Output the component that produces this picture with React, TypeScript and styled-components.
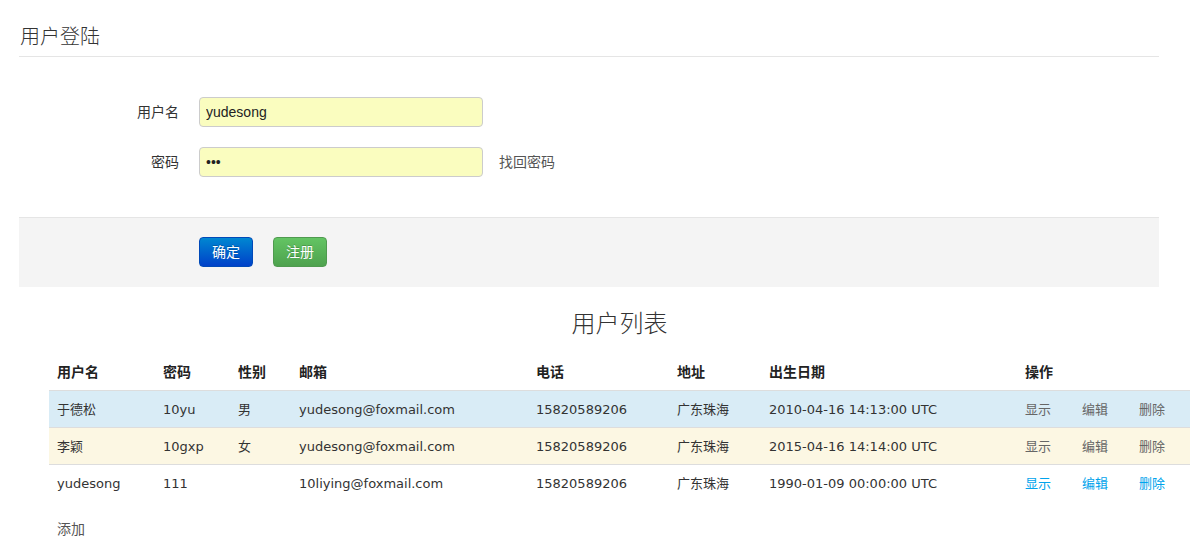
import React from "react";
import styled, { createGlobalStyle } from "styled-components";

const Global = createGlobalStyle`
  html, body { margin: 0; padding: 0; background: #fff; overflow: hidden; }
  body {
    font-family: "Liberation Sans", "Noto Sans CJK SC", sans-serif;
    font-size: 14px;
    color: #333;
  }
`;

const Page = styled.div`
  width: 1190px;
`;

const LoginSection = styled.section`
  width: 1140px;
  margin-left: 19px;
  padding-top: 16px;
`;

const Legend = styled.h2`
  margin: 0;
  padding-left: 1px;
  font-size: 20px;
  font-weight: 300;
  line-height: 40px;
  color: #333;
  border-bottom: 1px solid #e5e5e5;
  font-family: "Noto Sans CJK SC", sans-serif;
`;

const Fields = styled.div`
  display: flex;
  flex-direction: column;
  gap: 20px;
  padding: 40px 0 40px;
`;

const FieldRow = styled.div`
  display: flex;
  align-items: center;
  height: 30px;
`;

const Label = styled.label`
  width: 160px;
  margin-right: 20px;
  padding-bottom: 3px;
  text-align: right;
  font-size: 14px;
  color: #333;
  font-family: "Noto Sans CJK SC", sans-serif;
`;

const Input = styled.input`
  box-sizing: border-box;
  width: 284px;
  height: 30px;
  padding: 4px 6px;
  border: 1px solid #ccc;
  border-radius: 4px;
  background: #fafdbf;
  font-family: "Liberation Sans", sans-serif;
  font-size: 14px;
  color: #222;
  outline: none;
`;

const HelpLink = styled.a`
  margin-left: 16px;
  padding-bottom: 3px;
  font-size: 14px;
  color: #555;
  text-decoration: none;
  font-family: "Noto Sans CJK SC", sans-serif;
`;

const Actions = styled.div`
  display: flex;
  gap: 20px;
  padding: 19px 0 20px 180px;
  background: #f4f4f4;
  border-top: 1px solid #e5e5e5;
`;

const Button = styled.button<{ $tone: "primary" | "success" }>`
  box-sizing: border-box;
  width: 54px;
  height: 30px;
  border-radius: 4px;
  font-size: 14px;
  color: #fff;
  font-family: "Noto Sans CJK SC", sans-serif;
  cursor: pointer;
  padding: 0 0 2px;
  border: 1px solid
    ${(p) => (p.$tone === "primary" ? "#0049b8" : "#4f9a4f")};
  background: ${(p) =>
    p.$tone === "primary"
      ? "linear-gradient(to bottom, #0087d1, #0041c9)"
      : "linear-gradient(to bottom, #63c463, #4ea24e)"};
  text-shadow: 0 -1px 0 rgba(0, 0, 0, 0.2);
`;

const ListSection = styled.section`
  margin-left: 49px;
  width: 1141px;
`;

const ListTitle = styled.h1`
  margin: 0;
  padding: 17px 0 13px;
  text-align: center;
  font-size: 24px;
  font-weight: 300;
  line-height: 36px;
  color: #333;
  font-family: "Noto Sans CJK SC", sans-serif;
`;

const Table = styled.table`
  width: 1141px;
  table-layout: fixed;
  border-collapse: collapse;
  font-family: "DejaVu Sans", "Noto Sans CJK SC", sans-serif;
`;

const HeadRow = styled.tr`
  height: 37px;
`;

const Th = styled.th`
  padding: 0 8px 1px;
  text-align: left;
  font-size: 14px;
  font-weight: 700;
  line-height: 20px;
  color: #222;
  font-family: "Noto Sans CJK SC", sans-serif;
  border-bottom: 1px solid #ddd;
`;

const Tr = styled.tr<{ $bg?: string }>`
  height: 37px;
  background: ${(p) => p.$bg || "transparent"};
  border-top: 1px solid #ddd;
`;

const Td = styled.td`
  padding: 2px 8px 0;
  font-size: 13px;
  line-height: 20px;
  color: #333;
  white-space: nowrap;
`;

const ActionLink = styled.a<{ $active?: boolean }>`
  font-size: 13px;
  text-decoration: none;
  color: ${(p) => (p.$active ? "#00a3ec" : "#666")};
  font-family: "Noto Sans CJK SC", sans-serif;
`;

const AddLink = styled.a`
  display: block;
  margin-top: 17px;
  padding-left: 8px;
  font-size: 14px;
  color: #555;
  text-decoration: none;
  font-family: "Noto Sans CJK SC", sans-serif;
`;

const widths = [106, 75, 61, 237, 141, 92, 256, 57, 57, 59];

const rows = [
  { name: "于德松", pw: "10yu", sex: "男", mail: "yudesong@foxmail.com", tel: "15820589206", addr: "广东珠海", date: "2010-04-16 14:13:00 UTC", bg: "#d9ecf6", active: false },
  { name: "李颖", pw: "10gxp", sex: "女", mail: "yudesong@foxmail.com", tel: "15820589206", addr: "广东珠海", date: "2015-04-16 14:14:00 UTC", bg: "#fcf7e3", active: false },
  { name: "yudesong", pw: "111", sex: "", mail: "10liying@foxmail.com", tel: "15820589206", addr: "广东珠海", date: "1990-01-09 00:00:00 UTC", bg: "", active: true },
];

export default function App() {
  return (
    <Page>
      <Global />
      <LoginSection>
        <Legend>用户登陆</Legend>
        <Fields>
          <FieldRow>
            <Label>用户名</Label>
            <Input defaultValue="yudesong" />
          </FieldRow>
          <FieldRow>
            <Label>密码</Label>
            <Input type="password" defaultValue="123" />
            <HelpLink href="#">找回密码</HelpLink>
          </FieldRow>
        </Fields>
        <Actions>
          <Button $tone="primary">确定</Button>
          <Button $tone="success">注册</Button>
        </Actions>
      </LoginSection>
      <ListSection>
        <ListTitle>用户列表</ListTitle>
        <Table>
          <colgroup>
            {widths.map((w, i) => (
              <col key={i} style={{ width: w }} />
            ))}
          </colgroup>
          <thead>
            <HeadRow>
              <Th>用户名</Th>
              <Th>密码</Th>
              <Th>性别</Th>
              <Th>邮箱</Th>
              <Th>电话</Th>
              <Th>地址</Th>
              <Th>出生日期</Th>
              <Th colSpan={3}>操作</Th>
            </HeadRow>
          </thead>
          <tbody>
            {rows.map((r, i) => (
              <Tr key={i} $bg={r.bg}>
                <Td>{r.name}</Td>
                <Td>{r.pw}</Td>
                <Td>{r.sex}</Td>
                <Td>{r.mail}</Td>
                <Td>{r.tel}</Td>
                <Td>{r.addr}</Td>
                <Td>{r.date}</Td>
                <Td><ActionLink href="#" $active={r.active}>显示</ActionLink></Td>
                <Td><ActionLink href="#" $active={r.active}>编辑</ActionLink></Td>
                <Td><ActionLink href="#" $active={r.active}>删除</ActionLink></Td>
              </Tr>
            ))}
          </tbody>
        </Table>
        <AddLink href="#">添加</AddLink>
      </ListSection>
    </Page>
  );
}
